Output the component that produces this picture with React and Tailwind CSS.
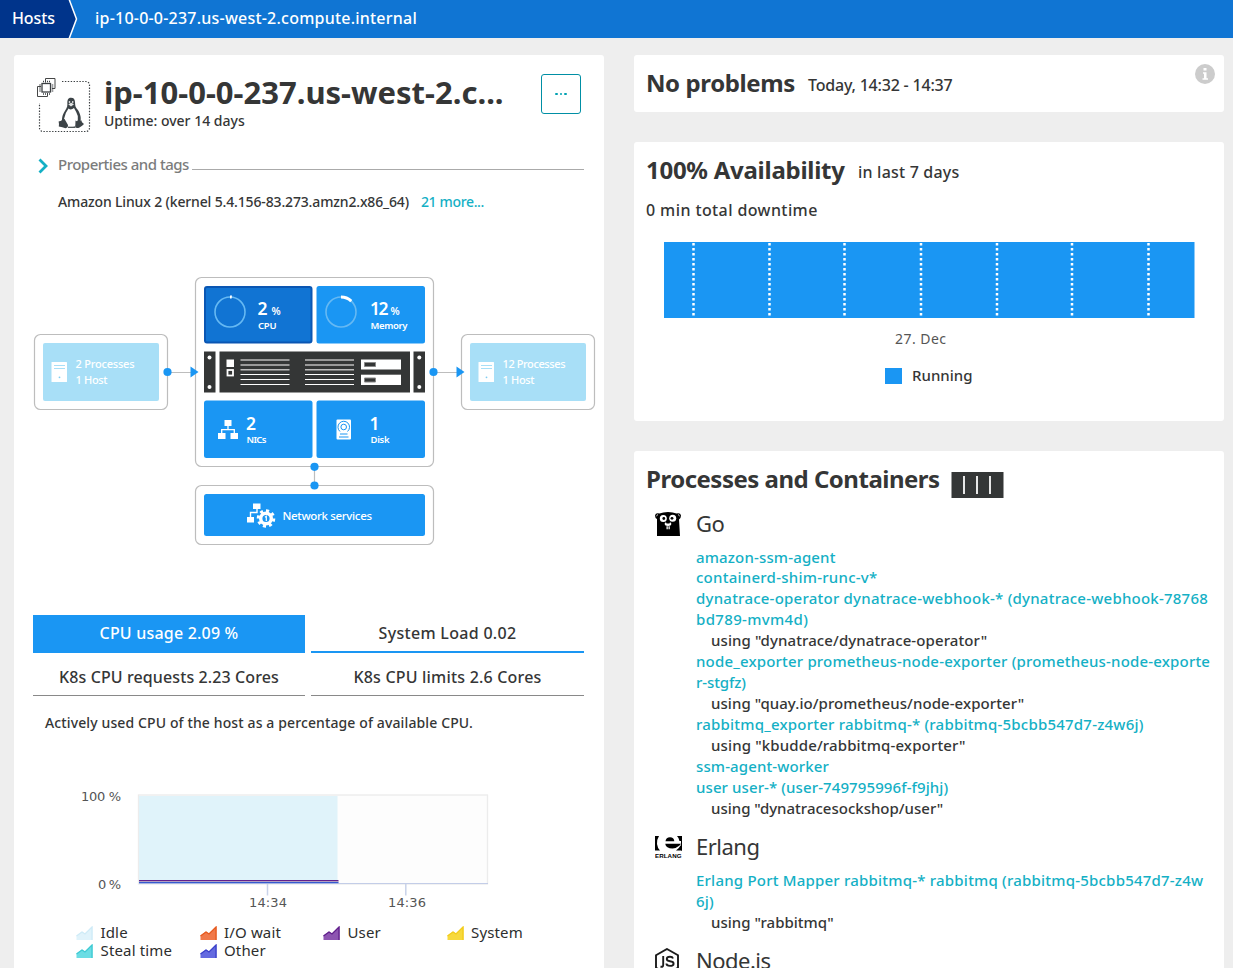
import React from "react";

const BLUE = "#1a96f3";

function HostIcon() {
  return (
    <svg className="block h-[56px] w-[56px]" viewBox="36 77 56 56" fill="none">
      <path d="M62 81.500H86a3.500 3.500 0 0 1 3.500 3.500V128a3.500 3.500 0 0 1-3.500 3.500H43a3.500 3.500 0 0 1-3.500-3.500V103" stroke="#3c4043" strokeWidth="1.200" strokeDasharray="1.400 1.500" />
      <path d="M45.500 82.500V78.500H55V88.500H52M41 86.500H37.500V96.500H47.500V93" stroke="#454646" />
      <rect x="42" y="83.500" width="8.500" height="8.500" stroke="#3c4043" strokeWidth="1.300" />
      <path d="M43 81.500H50M43 94H50M40 84.500V91.500M52.500 84.500V91.500" stroke="#3c4043" strokeWidth="1.600" strokeDasharray="1 1" />
      <path d="M71 97.800C67.800 97.800 67.200 100.500 67.400 104C67.600 107.500 65.500 109.500 64 112.500C62.700 115 62 117 62 120L75 127L80.500 121C81.500 117 79.500 112 77.500 109.500C75 106.500 75.300 105.500 75 102C74.800 99.300 73.800 97.800 71 97.800Z" fill="#3c4347" />
      <path d="M68.500 108.500Q71 110.500 74 108Q76.500 112 77.800 116Q78.500 120 76.500 122.500L75.500 126.500H67.500L64 119Q65 113 68.500 108.500Z" fill="#fff" />
      <path d="M58.600 121.500L61.300 120.800L62.800 118.300Q65 118.500 66 121.500L68 125Q68.200 127.700 65.500 128.200Q62.500 127.300 58.800 126.500Q59.300 124 58.600 121.500ZM75.500 120.500Q78.500 122.500 81.300 120.300L82 122.300L84 124Q82.500 125.500 79.500 127.500Q76 129 75.300 126.500Z" fill="#3c4347" />
      <path d="M68.300 104.200L71.200 102.800L74 104.200L71 106.500Z" fill="#e4e6e6" />
      <path d="M68.800 101.300h1.400v1.400h-1.400zM72 101.300h1.400v1.400H72z" fill="#fff" />
      <path d="M68 127.300H75.500" stroke="#3c4347" strokeWidth="1.200" />
    </svg>
  );
}

function ServerIcon({ x }) {
  return (
    <g transform={`translate(${x} 362)`}>
      <rect width="15.500" height="20" fill="#fff" rx="0.500" />
      <path d="M2.500 3.500H13.500M2.500 6.500H13.500" stroke="#a8dff7" />
      <circle cx="8" cy="15.300" r="0.900" fill="#7fcdf2" />
    </g>
  );
}

function Ring({ cx, portion }) {
  return (
    <g fill="none">
      <circle cx={cx} cy="312" r="15" stroke="#66b9f3" strokeWidth="1.600" />
      <circle cx={cx} cy="312" r="15" stroke="#fff" strokeWidth="3" pathLength="100" strokeDasharray={`${portion} 100`} transform={`rotate(-90 ${cx} 312)`} />
    </g>
  );
}

function Topology() {
  const frame = { fill: "#fff", stroke: "#bdbdbd", strokeWidth: 1.2 };
  const tile = { height: 57.5, rx: 2.5, fill: BLUE };
  return (
    <svg className="block h-[280px] w-[576px]" viewBox="28 270 576 280" fontFamily="'Noto Sans', sans-serif" fontWeight="500">
      <rect x="34.500" y="334.500" width="133" height="75" rx="6" {...frame} />
      <rect x="195.500" y="277.500" width="238" height="189" rx="6" {...frame} />
      <rect x="461.500" y="334.500" width="133" height="75" rx="6" {...frame} />
      <rect x="195.500" y="485.500" width="238" height="59" rx="6" {...frame} />
      <path d="M168 372.500H192M434 372.500H457M314.500 467V486" stroke="#bdbdbd" strokeWidth="1.200" />
      <path d="M190.500 366.500L198.500 372L190.500 377.500ZM456.500 366.500L464.500 372L456.500 377.500Z" fill={BLUE} />
      <g fill={BLUE}>
        <circle cx="167.500" cy="372" r="4.100" />
        <circle cx="433.500" cy="372" r="4.100" />
        <circle cx="314.500" cy="466.800" r="4.100" />
        <circle cx="314.500" cy="485.500" r="4.100" />
      </g>

      <rect x="43" y="343" width="116" height="58" rx="2" fill="#a8dff7" />
      <rect x="470" y="343" width="116" height="58" rx="2" fill="#a8dff7" />
      <ServerIcon x={51.5} />
      <ServerIcon x={478.5} />
      <g fill="#fff" fontSize="11">
        <text x="75.500" y="368" textLength="59">2 Processes</text>
        <text x="75.500" y="384" textLength="32">1 Host</text>
        <text x="502.500" y="368" textLength="63">12 Processes</text>
        <text x="502.500" y="384" textLength="32">1 Host</text>
      </g>

      <rect x="205" y="287" width="106.500" height="55.500" rx="2" fill="#1174d3" stroke="#0a56b3" strokeWidth="2" />
      <rect x="316.500" y="286" width="108.500" {...tile} />
      <rect x="204" y="400.500" width="108.500" {...tile} />
      <rect x="316.500" y="400.500" width="108.500" {...tile} />
      <rect x="204" y="494" width="221" height="42" rx="2.500" fill={BLUE} />
      <Ring cx={230} portion={2} />
      <Ring cx={341} portion={12} />
      <g fill="#fff" fontSize="17.500" fontWeight="600">
        <text x="257.500" y="315">2</text>
        <text x="370" y="315" textLength="18.500">12</text>
        <text x="246" y="430">2</text>
        <text x="369.500" y="430">1</text>
      </g>
      <g fill="#fff" fontSize="10.500" fontWeight="600">
        <text x="271.500" y="315" textLength="9">%</text>
        <text x="390.500" y="315" textLength="9">%</text>
      </g>
      <g fill="#fff" fontSize="9.500" fontWeight="600">
        <text x="258" y="329" textLength="18.500">CPU</text>
        <text x="370.500" y="329" textLength="37">Memory</text>
        <text x="246.500" y="443" textLength="20">NICs</text>
        <text x="370.500" y="443" textLength="19">Disk</text>
      </g>
      <text x="282.500" y="520" fill="#fff" fontSize="11.500" textLength="89.500">Network services</text>

      <g fill="#343636">
        <rect x="204" y="351.500" width="11.500" height="41" />
        <rect x="219.500" y="351.500" width="190.500" height="41" />
        <rect x="413.500" y="351.500" width="11.500" height="41" />
      </g>
      <g fill="#fff">
        <circle cx="209.500" cy="357.500" r="2" />
        <circle cx="209.500" cy="387" r="2" />
        <circle cx="419.300" cy="357.500" r="2" />
        <circle cx="419.300" cy="387" r="2" />
        <rect x="226.500" y="359.500" width="7.500" height="7.500" />
        <rect x="361" y="359.500" width="40" height="10" />
        <rect x="361" y="374.700" width="40" height="10.300" />
      </g>
      <rect x="227.500" y="370" width="5.500" height="5.500" fill="none" stroke="#fff" strokeWidth="1.800" />
      <path d="M240.500 360H289.500M305 360H354" stroke="#999" strokeWidth="2" />
      <path d="M240.500 365H289.500M305 365H354M240.500 369.800H289.500M305 369.800H354" stroke="#bcbcbc" strokeWidth="1.400" />
      <path d="M240.500 374.500H289.500M305 374.500H354M240.500 379.500H289.500M305 379.500H354M240.500 384.500H289.500M305 384.500H354" stroke="#fff" strokeWidth="1.200" />
      <path d="M364.500 362.500h11v4h-11zM364.500 378h11v4h-11z" fill="#343636" stroke="#888" />

      <g fill="#fff">
        <path d="M224.500 420h7v6h-7zM218 433h7.500v6h-7.500zM230.500 433h7.500v6h-7.500z" />
        <path d="M228 426V429.500M221.700 433V429.700H234.300V433" fill="none" stroke="#fff" strokeWidth="1.300" />
        <rect x="336.500" y="419.500" width="14.500" height="20" rx="1" />
      </g>
      <g fill="none" stroke={BLUE}>
        <path d="M340 431.500A5.800 5.800 0 1 1 347.500 431.500" />
        <circle cx="343.700" cy="427" r="2.800" />
        <path d="M340 434H347.500M339 437H348.500" />
      </g>
      <path d="M253 503.500h7.500v5.500h-7.500zM247 517h7v5.500h-7z" fill="#fff" />
      <path d="M257 509V512.500H250.500V517" fill="none" stroke="#fff" strokeWidth="1.400" />
      <circle cx="266" cy="518.500" r="9.500" fill={BLUE} />
      <circle cx="266" cy="518.500" r="7.800" fill="none" stroke="#fff" strokeWidth="3" pathLength="80" strokeDasharray="5 5" />
      <circle cx="266" cy="518.500" r="5.300" fill="none" stroke="#fff" strokeWidth="3.400" />
      <path d="M265 517.200L266.300 516.300V521" fill="none" stroke="#fff" strokeWidth="1.200" />
    </svg>
  );
}

function UsageChart() {
  return (
    <svg className="block h-[125px] w-[550px]" viewBox="33 787 550 125" fontFamily="'DejaVu Sans', sans-serif" fontSize="13" fill="#555">
      <rect x="138.500" y="795" width="349" height="89" fill="#fdfdfd" stroke="#ececec" strokeWidth="1.300" />
      <rect x="139" y="796" width="198.500" height="84" fill="#e0f3fa" />
      <rect x="139" y="883" width="349" height="1" fill="#c3cde8" />
      <rect x="139" y="880" width="199.500" height="1.300" fill="#61208c" />
      <rect x="139" y="881.300" width="199.500" height="0.900" fill="#a794b8" />
      <rect x="139" y="882" width="199.500" height="1.200" fill="#355bd0" />
      <path d="M267.500 884V895.500M405.800 884V895.500" stroke="#c9d3ea" strokeWidth="1.500" />
      <text x="81" y="801" textLength="40">100 %</text>
      <text x="98" y="889" textLength="23">0 %</text>
      <text x="249" y="907" textLength="38">14:34</text>
      <text x="388" y="907" textLength="38">14:36</text>
    </svg>
  );
}

function Legend({ color, line, label }) {
  return (
    <div className="flex h-[18px] w-[123.500px] items-center gap-[7.500px] text-[15px] text-[#2d2e2e]">
      <svg className="h-[14px] w-[17px]" viewBox="0 0 17 14">
        <path d="M0.500 14V9.500L6 5.500L9 7.500L16.500 0.500V14Z" fill={color} />
        <path d="M0.500 10L6 6L9 8L16 1V14" fill="none" stroke={line} strokeWidth="1.300" />
      </svg>
      <span className="pb-[2px] tracking-[0.150px]">{label}</span>
    </div>
  );
}

function GopherIcon() {
  return (
    <svg className="h-[24px] w-[26px]" viewBox="0 0 26 24">
      <path d="M2 24V7Q0 6 0 3.500Q0.500 0.500 4.500 1.500Q8 0 13 0T21.500 1.500Q25.500 0.500 26 3.500Q26 6 24 7.500L25 24Z" fill="#000" />
      <circle cx="8.300" cy="6.500" r="3.500" fill="#fff" />
      <circle cx="17.700" cy="6.300" r="3.500" fill="#fff" />
      <circle cx="8.800" cy="6.500" r="1.400" />
      <circle cx="17" cy="6.300" r="1.400" />
      <ellipse cx="13" cy="12" rx="3.300" ry="1.900" fill="#fff" />
      <ellipse cx="13" cy="10.400" rx="1.900" ry="1.200" />
      <path d="M11.500 14.300h1.300v3h-1.300zM13.500 14.300h1.300v3h-1.300z" fill="#fff" />
      <path d="M1.300 4L3 2.500M24.700 4L23 2.500" stroke="#fff" strokeWidth="0.900" />
    </svg>
  );
}

function ErlangIcon() {
  return (
    <svg className="h-[23px] w-[27px]" viewBox="0 0 27 23">
      <path d="M0 0H4Q1.500 4 2 8Q2.500 12 5 14.500H0Z" />
      <path d="M27 0H22Q24 2 24.500 5H27ZM27 9.500V14.500H21Q24 12.500 25.500 9.500Z" />
      <path d="M10.500 5.300Q11 1.200 15 1.200T19.300 5.300Z" />
      <path d="M10.200 7.700H26L24.500 9.500Q21 12.500 17.500 12.500Q11 12.500 10.200 7.700Z" />
      <path d="M26 0h1v14.500h-1z" />
      <text x="0" y="22" fontFamily="'Liberation Sans', sans-serif" fontWeight="700" fontSize="6.200" textLength="26.500">ERLANG</text>
    </svg>
  );
}

function NodeIcon() {
  return (
    <svg className="h-[27px] w-[24px]" viewBox="0 0 24 27" fill="none" stroke="#1c1c1c" strokeWidth="1.900">
      <path d="M12 1L23 7.300V19.700L12 26L1 19.700V7.300Z" />
      <path d="M8.200 8V17Q8.200 19.500 5.500 18.500" />
      <path d="M18 10.500Q17.500 8.800 15 8.800Q11.800 8.800 11.800 11Q11.800 12.900 15 13.200Q18.600 13.600 18.600 15.700Q18.600 17.900 15 17.900Q11.500 17.900 11.400 15.500" />
    </svg>
  );
}

const go = [
  ["amazon-ssm-agent", "h-[20px] tracking-[0.150px]"],
  ["containerd-shim-runc-v*", "h-[21px] tracking-[0.250px]"],
  ["dynatrace-operator dynatrace-webhook-* (dynatrace-webhook-78768", "h-[21px] tracking-[0.230px]"],
  ["bd789-mvm4d)", "h-[21px] tracking-[0.350px]"],
  ['using "dynatrace/dynatrace-operator"', "h-[21px] tracking-[0.100px]"],
  ["node_exporter prometheus-node-exporter (prometheus-node-exporte", "h-[21px] tracking-[0.180px]"],
  ["r-stgfz)", "h-[21px] tracking-[-0.100px]"],
  ['using "quay.io/prometheus/node-exporter"', "h-[21px] tracking-[0.070px]"],
  ["rabbitmq_exporter rabbitmq-* (rabbitmq-5bcbb547d7-z4w6j)", "h-[21px] tracking-[0.210px]"],
  ['using "kbudde/rabbitmq-exporter"', "h-[21px] tracking-[0.140px]"],
  ["ssm-agent-worker", "h-[21px] tracking-[0.120px]"],
  ["user user-* (user-749795996f-f9jhj)", "h-[21px] tracking-[0.100px]"],
  ['using "dynatracesockshop/user"', "h-[21px] tracking-[0px]"],
];
const erlang = [
  ["Erlang Port Mapper rabbitmq-* rabbitmq (rabbitmq-5bcbb547d7-z4w", "h-[21px] tracking-[0.210px]"],
  ["6j)", "h-[21px] tracking-[0.200px]"],
  ['using "rabbitmq"', "h-[21px] tracking-[0.020px]"],
];

function ProcessGroup({ icon, name, lines }) {
  return (
    <section>
      <div className="flex h-[32px] items-center">
        <div className="flex w-[50px] items-center pl-[8.500px]">{icon}</div>
        <h3 className="pb-[2px] text-[22px] tracking-[-0.500px]">{name}</h3>
      </div>
      <ul className="mt-[7px] ml-[50px] text-[15px] leading-[21px] font-medium">
        {lines.map(([text, style]) => (
          <li key={text} className={`${style} ${text.startsWith("using") ? "pl-[15px] text-[#353636]" : "text-[#14b0c5]"}`}>
            {text}
          </li>
        ))}
      </ul>
    </section>
  );
}

export default function App() {
  return (
    <div className="flex h-[968px] w-[1233px] flex-col overflow-hidden bg-[#eeeeee] font-['Noto_Sans',sans-serif] whitespace-nowrap text-[#353636]">
      <nav className="flex h-[38px] shrink-0 bg-[#1075d3] text-[16px] font-medium text-white">
        <div className="flex w-[68px] items-center bg-[#00348b] pb-[2px] pl-[12px] tracking-[-0.100px]">Hosts</div>
        <svg className="h-[38px] w-[11px]" viewBox="0 0 11 38">
          <path d="M0 0H1L8.500 19L1 38H0Z" fill="#00348b" />
          <path d="M1 -1L8.500 19L1 39" fill="none" stroke="#fff" strokeWidth="1.500" />
        </svg>
        <div className="flex items-center pb-[2px] pl-[16px] tracking-[0.220px]">ip-10-0-0-237.us-west-2.compute.internal</div>
      </nav>

      <main className="flex gap-[30px] pt-[17px] pl-[14px]">
        <section className="flex h-[960px] w-[590px] flex-col rounded-[3px] bg-white">
          <div className="flex h-[95px] pt-[19px] pl-[22px]">
            <div className="pt-[3px]"><HostIcon /></div>
            <div className="ml-[12px] w-[437px]">
              <h1 className="h-[38px] text-[31px] leading-[36px] font-bold">ip-10-0-0-237.us-west-2.c...</h1>
              <p className="h-[18px] text-[14px] leading-[18px] font-medium">Uptime: over 14 days</p>
            </div>
            <button className="flex h-[40px] w-[40px] items-center justify-center gap-[2px] rounded-[3px] border border-[#008fa5]">
              <i className="h-[2.500px] w-[2.500px] rounded-[1px] bg-[#00a1b2]" />
              <i className="h-[2.500px] w-[2.500px] rounded-[1px] bg-[#00a1b2]" />
              <i className="h-[2.500px] w-[2.500px] rounded-[1px] bg-[#00a1b2]" />
            </button>
          </div>

          <div className="mr-[20px] ml-[24px] flex h-[30px] items-center text-[#7b7c7c]">
            <svg className="mt-[1px] h-[16px] w-[11px]" viewBox="0 0 11 16">
              <path d="M1.500 1.500L8 8L1.500 14.500" fill="none" stroke="#14b0c5" strokeWidth="2.800" />
            </svg>
            <span className="ml-[9px] pb-[2px] text-[15px] font-medium tracking-[-0.500px]">Properties and tags</span>
            <div className="mt-[9px] ml-[3px] h-px flex-1 bg-[#aaaaaa]" />
          </div>
          <div className="ml-[44px] flex h-[44px] items-center gap-[12px] pb-[2px] text-[14px] font-medium">
            <span className="tracking-[-0.150px]">Amazon Linux 2 (kernel 5.4.156-83.273.amzn2.x86_64)</span>
            <span className="tracking-[-0.350px] text-[#14b0c5]">21 more...</span>
          </div>

          <div className="mt-[46px] ml-[14px]"><Topology /></div>

          <div className="mt-[65px] ml-[19px] grid w-[551px] grid-cols-[272px_273px] gap-x-[6px] gap-y-[6px] text-center text-[16px] font-medium">
            <div className="h-[38px] bg-[#1a96f3] leading-[36px] tracking-[0.200px] text-white">CPU usage 2.09 %</div>
            <div className="h-[38px] border-b-2 border-[#1a96f3] leading-[36px] tracking-[0.300px]">System Load 0.02</div>
            <div className="h-[37px] border-b border-[#898989] leading-[36px] tracking-[0.110px]">K8s CPU requests 2.23 Cores</div>
            <div className="h-[37px] border-b border-[#898989] leading-[36px] tracking-[0.200px]">K8s CPU limits 2.6 Cores</div>
          </div>
          <p className="mt-[17px] ml-[31px] h-[20px] text-[14px] leading-[20px] font-medium tracking-[0.120px]">Actively used CPU of the host as a percentage of available CPU.</p>

          <div className="mt-[54px] ml-[19px]"><UsageChart /></div>
          <div className="mt-[12px] ml-[62px] flex w-[500px] flex-wrap">
            <Legend color="#e0f3fb" line="#cfebf7" label="Idle" />
            <Legend color="#f0794a" line="#e65a1f" label="I/O wait" />
            <Legend color="#8d55b1" line="#61208c" label="User" />
            <Legend color="#f7d93c" line="#f2cc1c" label="System" />
            <Legend color="#6bdde4" line="#3fcad3" label="Steal time" />
            <Legend color="#646ae0" line="#3b41c9" label="Other" />
          </div>
        </section>

        <div className="flex w-[590px] flex-col">
          <section className="flex h-[57px] rounded-[3px] bg-white pl-[12px]">
            <h2 className="h-[57px] w-[149px] text-[24px] leading-[55px] font-bold tracking-[-0.400px]">No problems</h2>
            <span className="ml-[13px] flex-1 text-[16px] leading-[60px] font-medium tracking-[-0.200px]">Today, 14:32 - 14:37</span>
            <svg className="mt-[9px] mr-[9px] h-[20px] w-[20px]" viewBox="0 0 20 20">
              <circle cx="10" cy="10" r="10" fill="#cccccc" />
              <path d="M8.500 4h3v2.500h-3zM8 8.200h3.500v6H13v1.600H7.500v-1.600H9V9.800H8z" fill="#fff" />
            </svg>
          </section>

          <section className="mt-[30px] h-[279px] rounded-[3px] bg-white">
            <div className="flex h-[58px] pl-[12px]">
              <h2 className="w-[199px] text-[24px] leading-[55px] font-bold tracking-[-0.270px]">100% Availability</h2>
              <span className="ml-[13px] text-[16px] leading-[60px] font-medium tracking-[0.200px]">in last 7 days</span>
            </div>
            <p className="pl-[12px] text-[16px] leading-[20px] font-medium tracking-[0.400px]">0 min total downtime</p>
            <svg className="mt-[22px] ml-[30px] block h-[76px] w-[531px]" viewBox="664 242 531 76">
              <rect x="664" y="242" width="530.500" height="76" fill={BLUE} />
              <path d="M693.500 243V317M769.500 243V317M844.500 243V317M921 243V317M997 243V317M1072 243V317M1148.500 243V317" stroke="#fff" strokeWidth="2.500" strokeDasharray="2.500 2.500" />
            </svg>
            <div className="mt-[11px] pl-[261px] text-[14px] leading-[20px] tracking-[0.450px] text-[#555]">27. Dec</div>
            <div className="mt-[17px] flex h-[20px] items-center gap-[10px] pl-[251px] text-[15px] font-medium">
              <i className="h-[16px] w-[17px] bg-[#1a96f3]" />
              <span className="pb-[2px]">Running</span>
            </div>
          </section>

          <section className="mt-[30px] h-[560px] rounded-[3px] bg-white pl-[12px]">
            <div className="flex h-[57px]">
              <h2 className="w-[293px] text-[24px] leading-[55px] font-bold tracking-[-0.500px]">Processes and Containers</h2>
              <svg className="mt-[21px] ml-[12px] h-[26px] w-[53px]" viewBox="0 0 53 26">
                <rect x="0.500" width="52" height="26" fill="#343636" />
                <path d="M13 4V22M26 4V22M39 4V22" stroke="#e6e6e6" strokeWidth="2" />
              </svg>
            </div>
            <ProcessGroup icon={<GopherIcon />} name="Go" lines={go} />
            <div className="h-[12px]" />
            <ProcessGroup icon={<ErlangIcon />} name="Erlang" lines={erlang} />
            <div className="h-[12px]" />
            <ProcessGroup icon={<NodeIcon />} name="Node.js" lines={[]} />
          </section>
        </div>
      </main>
    </div>
  );
}
